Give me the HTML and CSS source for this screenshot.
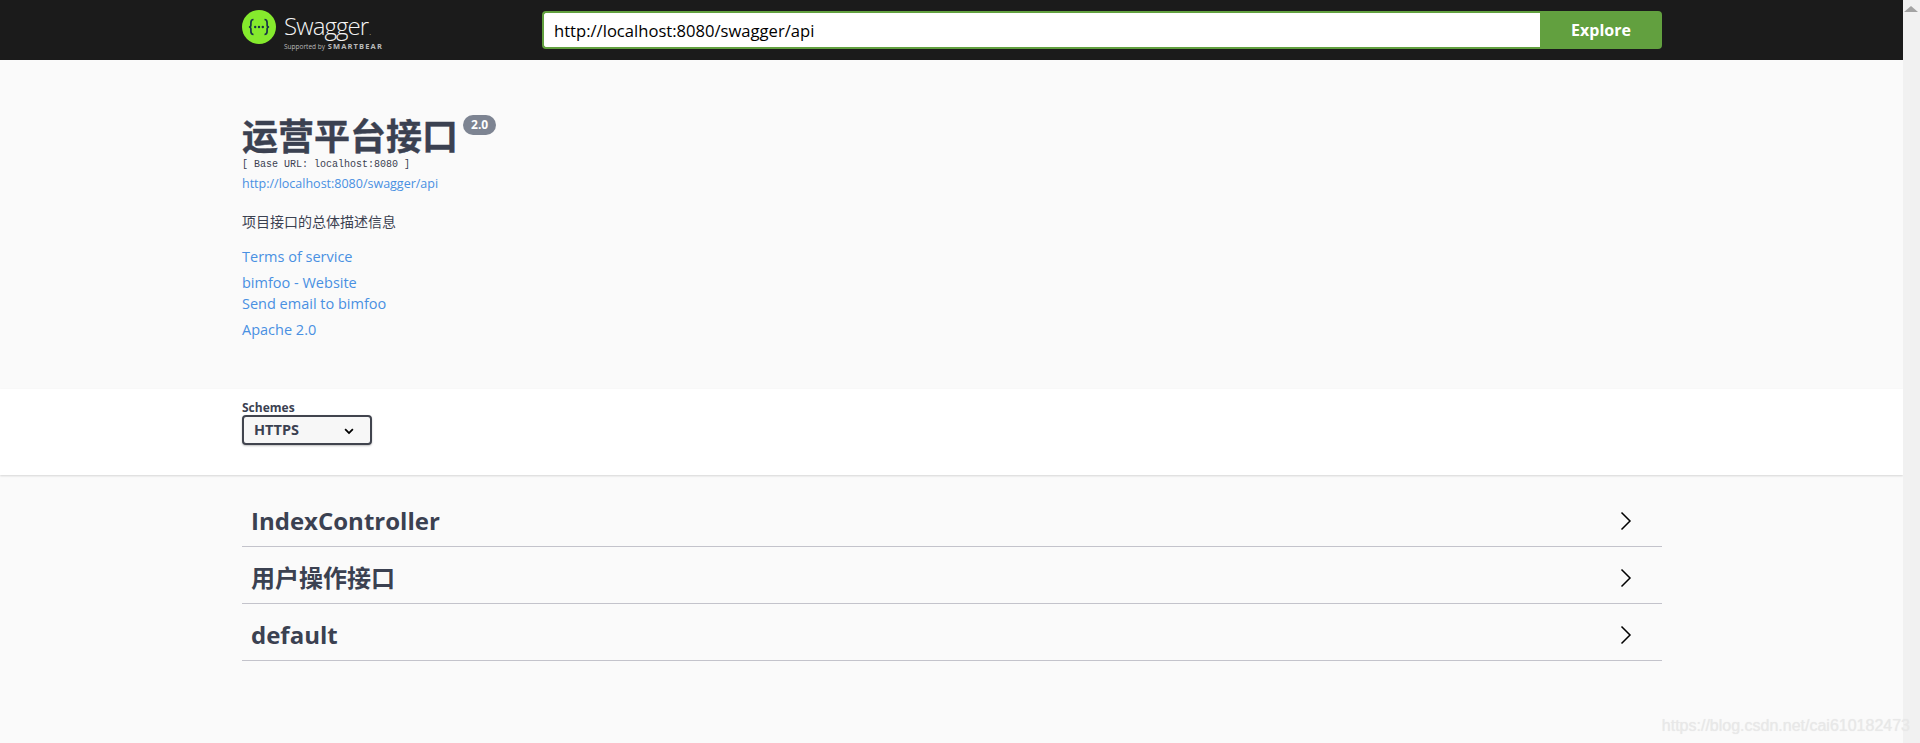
FILE: index.html
```html
<!DOCTYPE html>
<html lang="en">
<head>
    <meta charset="UTF-8">
    <meta name="viewport" content="width=device-width, initial-scale=1.0">
    <title>Swagger UI</title>
    <link rel="stylesheet" href="styles.css">
</head>
<body>
    <div class="page">
        <div class="topbar">
            <div class="wrap topbar-inner">
                <a class="logo" href="#">
                    <svg class="logo-mark" width="34" height="34" viewBox="0 0 34 34">
                        <circle cx="17" cy="17" r="17" fill="#85ea2d"/>
                        <path d="M11.5 9.5c-2.6 0-2.6 1.4-2.6 3.2v2.2c0 1.2-.8 2.1-2 2.1 1.2 0 2 .9 2 2.1v2.2c0 1.8 0 3.2 2.6 3.2M22.5 9.5c2.6 0 2.6 1.4 2.6 3.2v2.2c0 1.2.8 2.1 2 2.1-1.2 0-2 .9-2 2.1v2.2c0 1.8 0 3.2-2.6 3.2" fill="none" stroke="#173647" stroke-width="1.7"/>
                        <circle cx="13.2" cy="17" r="1.2" fill="#173647"/>
                        <circle cx="17" cy="17" r="1.2" fill="#173647"/>
                        <circle cx="20.8" cy="17" r="1.2" fill="#173647"/>
                    </svg>
                    <span class="logo-text">
                        <span class="logo-name">Swagger<small>.</small></span>
                        <span class="logo-sub">Supported by <b>SMARTBEAR</b></span>
                    </span>
                </a>
                <form class="explore">
                    <input class="explore-input" type="text" value="http://localhost:8080/swagger/api">
                    <button class="explore-btn" type="button">Explore</button>
                </form>
            </div>
        </div>

        <div class="info">
            <div class="wrap">
                <div class="title-row">
                    <h2 class="title">运营平台接口</h2>
                    <span class="version">2.0</span>
                </div>
                <pre class="base-url">[ Base URL: localhost:8080 ]</pre>
                <a class="link small" href="#">http://localhost:8080/swagger/api</a>
                <p class="desc">项目接口的总体描述信息</p>
                <div class="info-links">
                    <a class="link" href="#">Terms of service</a>
                    <a class="link contact" href="#">bimfoo - Website</a>
                    <a class="link" href="#">Send email to bimfoo</a>
                    <a class="link license" href="#">Apache 2.0</a>
                </div>
            </div>
        </div>

        <div class="schemes">
            <div class="wrap">
                <div class="schemes-title">Schemes</div>
                <div class="select">
                    <span>HTTPS</span>
                    <svg width="20" height="20" viewBox="0 0 20 20"><path d="M13.25 8.5L10 11.7 6.75 8.5 5.5 9.7l4.5 4.5 4.5-4.5z"/></svg>
                </div>
            </div>
        </div>

        <div class="wrap tags">
            <div class="tag">
                <h4>IndexController</h4>
                <svg width="20" height="20" viewBox="0 0 20 20"><path d="M5.5 1.5L14 10 5.5 18.5" /></svg>
            </div>
            <div class="tag">
                <h4>用户操作接口</h4>
                <svg width="20" height="20" viewBox="0 0 20 20"><path d="M5.5 1.5L14 10 5.5 18.5" /></svg>
            </div>
            <div class="tag">
                <h4>default</h4>
                <svg width="20" height="20" viewBox="0 0 20 20"><path d="M5.5 1.5L14 10 5.5 18.5" /></svg>
            </div>
        </div>
    </div>

    <div class="scrollbar"><span class="scroll-up"></span></div>
    <div class="watermark">https://blog.csdn.net/cai610182473</div>
</body>
</html>
```

FILE: styles.css
```css
html, body {
    height: 100%;
}
body {
    margin: 0;
    display: flex;
    overflow: hidden;
    background-color: #fff;
    color: #3b4151;
    font-family: "Open Sans", "Noto Sans CJK SC", sans-serif;
}
.page {
    flex: 1;
    height: 100vh;
    background-color: #fafafa;
}
.wrap {
    width: 1420px;
    margin-left: 242px;
}
.topbar {
    height: 60px;
    background-color: #1b1b1b;
}
.topbar-inner {
    display: flex;
    align-items: flex-start;
}
.logo {
    display: flex;
    width: 300px;
    padding-top: 10px;
    color: #fff;
    text-decoration: none;
}
.logo-mark {
    flex: none;
}
.logo-text {
    display: flex;
    flex-direction: column;
    margin-left: 8px;
}
.logo-name {
    margin-top: 3px;
    font-size: 24px;
    font-weight: 300;
    line-height: 26px;
    color: #f4f4f4;
    letter-spacing: -0.9px;
}
.logo-name small {
    font-size: 8px;
    line-height: 1;
    margin-left: 1px;
}
.logo-sub {
    font-size: 6.5px;
    line-height: 11px;
    margin-top: 2px;
    color: #bbb;
    white-space: nowrap;
}
.logo-sub b {
    font-size: 7.5px;
    letter-spacing: 1.15px;
    margin-left: 1px;
}
.explore {
    display: flex;
    flex: 1;
    margin: 11px 0 0;
}
.explore-input {
    flex: 1;
    min-width: 0;
    height: 38px;
    box-sizing: border-box;
    padding: 0 10px;
    border: 2px solid #62a03f;
    border-right: none;
    border-radius: 4px 0 0 4px;
    outline: none;
    background: #fff;
    color: #000;
    font-family: "Open Sans", sans-serif;
    font-size: 16.6px;
}
.explore-btn {
    width: 122px;
    height: 38px;
    padding: 0;
    border: none;
    border-radius: 0 4px 4px 0;
    background-color: #62a03f;
    color: #fff;
    font-family: "Open Sans", sans-serif;
    font-size: 16px;
    font-weight: 700;
}
.info {
    height: 329px;
    box-sizing: border-box;
    padding-top: 53px;
}
.title-row {
    display: flex;
    align-items: flex-start;
}
.title {
    margin: 0;
    font-size: 36px;
    line-height: 42px;
    font-weight: 700;
    font-family: "Noto Sans CJK SC", sans-serif;
    -webkit-text-stroke: 0.4px #3b4151;
}
.version {
    margin: 2px 0 0 5px;
    padding: 0 8px;
    height: 20px;
    border-radius: 10px;
    background-color: #7d8492;
    color: #fff;
    font-size: 12px;
    font-weight: 700;
    line-height: 20px;
}
.base-url {
    margin: 3px 0 0;
    font-family: "Liberation Mono", monospace;
    font-size: 10px;
    line-height: 14px;
}
.link {
    display: block;
    color: #4990e2;
    text-decoration: none;
    font-size: 14.5px;
    line-height: 21px;
}
.link.small {
    margin-top: 3px;
    font-size: 12.5px;
    line-height: 18px;
}
.desc {
    margin: 18px 0 0;
    font-size: 14px;
    line-height: 21px;
}
.info-links {
    margin-top: 14px;
}
.contact {
    margin-top: 5px;
}
.license {
    margin-top: 5px;
}
.schemes {
    height: 86px;
    box-sizing: border-box;
    padding-top: 13px;
    background-color: #fff;
    box-shadow: 0 1px 2px 0 rgba(0, 0, 0, 0.15);
}
.schemes-title {
    font-size: 12px;
    line-height: 11px;
    font-weight: 700;
}
.select {
    display: flex;
    align-items: center;
    justify-content: space-between;
    width: 130px;
    height: 30px;
    box-sizing: border-box;
    margin-top: 2px;
    padding: 0 11px 1px 10px;
    border: 2px solid #41444e;
    border-radius: 4px;
    background-color: #f7f7f7;
    box-shadow: 0 1px 2px 0 rgba(0, 0, 0, 0.25);
    font-size: 14.5px;
    font-weight: 700;
}
.tags {
    padding-top: 15px;
}
.tag {
    display: flex;
    align-items: center;
    justify-content: space-between;
    height: 57px;
    box-sizing: border-box;
    padding: 5px 26px 0 9px;
    border-bottom: 1px solid #c3c3cb;
}
.tag h4 {
    margin: 0;
    font-size: 24px;
    font-weight: 700;
    line-height: 36px;
}
.tag svg {
    fill: none;
    stroke: #000;
    stroke-width: 1.5;
}
.scrollbar {
    flex: none;
    width: 17px;
    height: 100vh;
    background-color: #f1f1f1;
}
.scroll-up {
    display: block;
    width: 0;
    margin: 6px 0 0 1px;
    border-top: none;
    border-bottom: 6px solid #a3a3a3;
    border-left: 7.5px solid transparent;
    border-right: 7.5px solid transparent;
}
.watermark {
    position: absolute;
    right: 10px;
    top: 716px;
    font-family: "Liberation Sans", sans-serif;
    font-size: 16px;
    line-height: 20px;
    color: #e8e8e8;
    text-shadow: 0 0 1px #e8e8e8;
}
```
